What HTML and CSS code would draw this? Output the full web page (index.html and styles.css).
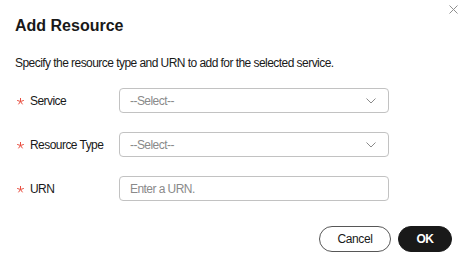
FILE: index.html
```html
<!DOCTYPE html>
<html lang="en">
<head>
    <meta charset="UTF-8">
    <meta name="viewport" content="width=device-width, initial-scale=1.0">
    <title>Add Resource</title>
    <link rel="stylesheet" href="styles.css">
</head>
<body>
    <div class="dialog">
        <button class="dialog_close" aria-label="Close">
            <svg width="9" height="9" viewBox="0 0 9 9"><path d="M0.5 0.5L8.5 8.5M8.5 0.5L0.5 8.5" stroke="#8f8f8f" stroke-width="1" fill="none"/></svg>
        </button>
        <h2 class="dialog_title">Add Resource</h2>
        <p class="dialog_desc">Specify the resource type and URN to add for the selected service.</p>
        <form class="form">
            <div class="form_row">
                <label class="form_label">
                    <svg class="form_star" width="7" height="7" viewBox="0 0 7 7"><path d="M3.5 3.5L3.5 0M3.5 3.5L6.83 2.42M3.5 3.5L5.56 6.33M3.5 3.5L1.44 6.33M3.5 3.5L0.17 2.42" stroke="#e84e40" stroke-width="1" fill="none"/></svg>
                    Service
                </label>
                <div class="form_control form_select">
                    <span class="form_placeholder">--Select--</span>
                    <svg class="form_arrow" width="10" height="6" viewBox="0 0 10 6"><path d="M0.5 0.5L5 5L9.5 0.5" stroke="#8a8a8a" stroke-width="1" fill="none"/></svg>
                </div>
            </div>
            <div class="form_row">
                <label class="form_label">
                    <svg class="form_star" width="7" height="7" viewBox="0 0 7 7"><path d="M3.5 3.5L3.5 0M3.5 3.5L6.83 2.42M3.5 3.5L5.56 6.33M3.5 3.5L1.44 6.33M3.5 3.5L0.17 2.42" stroke="#e84e40" stroke-width="1" fill="none"/></svg>
                    Resource Type
                </label>
                <div class="form_control form_select">
                    <span class="form_placeholder">--Select--</span>
                    <svg class="form_arrow" width="10" height="6" viewBox="0 0 10 6"><path d="M0.5 0.5L5 5L9.5 0.5" stroke="#8a8a8a" stroke-width="1" fill="none"/></svg>
                </div>
            </div>
            <div class="form_row">
                <label class="form_label">
                    <svg class="form_star" width="7" height="7" viewBox="0 0 7 7"><path d="M3.5 3.5L3.5 0M3.5 3.5L6.83 2.42M3.5 3.5L5.56 6.33M3.5 3.5L1.44 6.33M3.5 3.5L0.17 2.42" stroke="#e84e40" stroke-width="1" fill="none"/></svg>
                    URN
                </label>
                <input class="form_control form_input" type="text" placeholder="Enter a URN.">
            </div>
        </form>
        <div class="dialog_footer">
            <button class="btn btn-cancel">Cancel</button>
            <button class="btn btn-ok">OK</button>
        </div>
    </div>
</body>
</html>
```

FILE: styles.css
```css
body {
    margin: 0;
    background-color: white;
    color: #191919;
    font-family: "Liberation Sans", Arial, sans-serif;
    font-size: 12px;
    letter-spacing: -0.55px;
}
.dialog {
    position: relative;
    padding: 15px 14px 14px 15px;
    height: 265px;
    box-sizing: border-box;
}
.dialog_close {
    position: absolute;
    top: 5px;
    right: 8px;
    border: none;
    background: none;
    padding: 0;
    width: 9px;
    height: 9px;
    cursor: pointer;
}
.dialog_close svg {
    display: block;
}
.dialog_title {
    margin: 0;
    font-size: 16px;
    line-height: 22px;
    font-weight: bold;
    letter-spacing: 0;
}
.dialog_desc {
    margin: 17px 0 0;
    line-height: 18px;
}
.form {
    margin-top: 16px;
    display: flex;
    flex-direction: column;
    gap: 19px;
}
.form_row {
    display: flex;
    align-items: center;
    height: 25px;
}
.form_label {
    width: 102px;
    padding-left: 2px;
    display: flex;
    align-items: center;
}
.form_star {
    display: block;
    margin-right: 6px;
    position: relative;
    top: 1px;
}
.form_control {
    width: 270px;
    height: 25px;
    box-sizing: border-box;
    border: 1px solid #c2c2c2;
    border-radius: 4px;
    padding: 0 12px 0 10px;
    font-family: inherit;
    font-size: 12px;
    letter-spacing: -0.55px;
}
.form_select {
    display: flex;
    align-items: center;
    justify-content: space-between;
}
.form_placeholder {
    color: #8a8a8a;
}
.form_input::placeholder {
    color: #8a8a8a;
}
.form_input {
    outline: none;
}
.dialog_footer {
    margin-top: 25px;
    display: flex;
    justify-content: flex-end;
    gap: 7px;
}
.btn {
    height: 26px;
    border-radius: 13px;
    font-family: inherit;
    font-size: 12px;
    letter-spacing: -0.4px;
    cursor: pointer;
}
.btn-cancel {
    width: 72px;
    background: white;
    border: 1px solid #575757;
    color: #191919;
}
.btn-ok {
    width: 54px;
    background: #191919;
    border: 1px solid #191919;
    color: white;
    font-weight: bold;
}
```
